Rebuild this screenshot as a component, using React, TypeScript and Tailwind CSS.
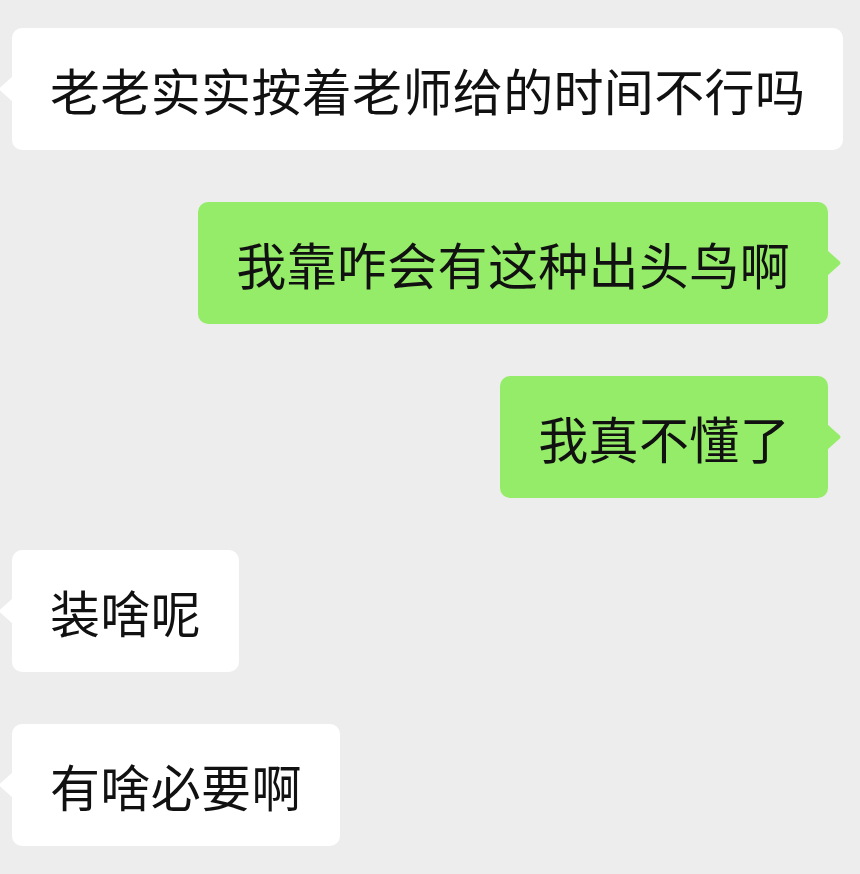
import React from 'react';

type Msg = { id: number; text: string; mine: boolean };

const messages: Msg[] = [
  { id: 1, text: '老老实实按着老师给的时间不行吗', mine: false },
  { id: 2, text: '我靠咋会有这种出头鸟啊', mine: true },
  { id: 3, text: '我真不懂了', mine: true },
  { id: 4, text: '装啥呢', mine: false },
  { id: 5, text: '有啥必要啊', mine: false },
];

const Bubble: React.FC<{ msg: Msg }> = ({ msg }) => {
  if (msg.mine) {
    return (
      <div className="flex justify-end pr-[32px]">
        <div className="relative h-[122px] flex items-center px-[38px] rounded-[10px] bg-[#95ec69] text-[#111111]">
          <span className="text-[50px] leading-none tracking-[0.35px] whitespace-nowrap">{msg.text}</span>
          <svg className="absolute -right-[14px] top-1/2 -translate-y-1/2" width="15" height="26" viewBox="0 0 15 26">
            <path d="M0 0 L12.5 11.2 Q14.5 13 12.5 14.8 L0 26 Z" fill="#95ec69" />
          </svg>
        </div>
      </div>
    );
  }
  return (
    <div className="flex justify-start pl-[12px]">
      <div className="relative h-[122px] flex items-center px-[38px] rounded-[10px] bg-white text-[#111111]">
        <span className="text-[50px] leading-none tracking-[0.35px] whitespace-nowrap">{msg.text}</span>
        <svg className="absolute -left-[13px] top-1/2 -translate-y-1/2" width="14" height="26" viewBox="0 0 14 26">
          <path d="M14 0 L1.5 11.2 Q-0.5 13 1.5 14.8 L14 26 Z" fill="#ffffff" />
        </svg>
      </div>
    </div>
  );
};

export default function App() {
  return (
    <div
      className="w-[860px] h-[874px] bg-[#ededed] overflow-hidden pt-[28px] flex flex-col gap-[52px]"
      style={{ fontFamily: '"Noto Sans CJK SC", "Noto Sans", sans-serif' }}
    >
      {messages.map(m => (
        <Bubble key={m.id} msg={m} />
      ))}
    </div>
  );
}
